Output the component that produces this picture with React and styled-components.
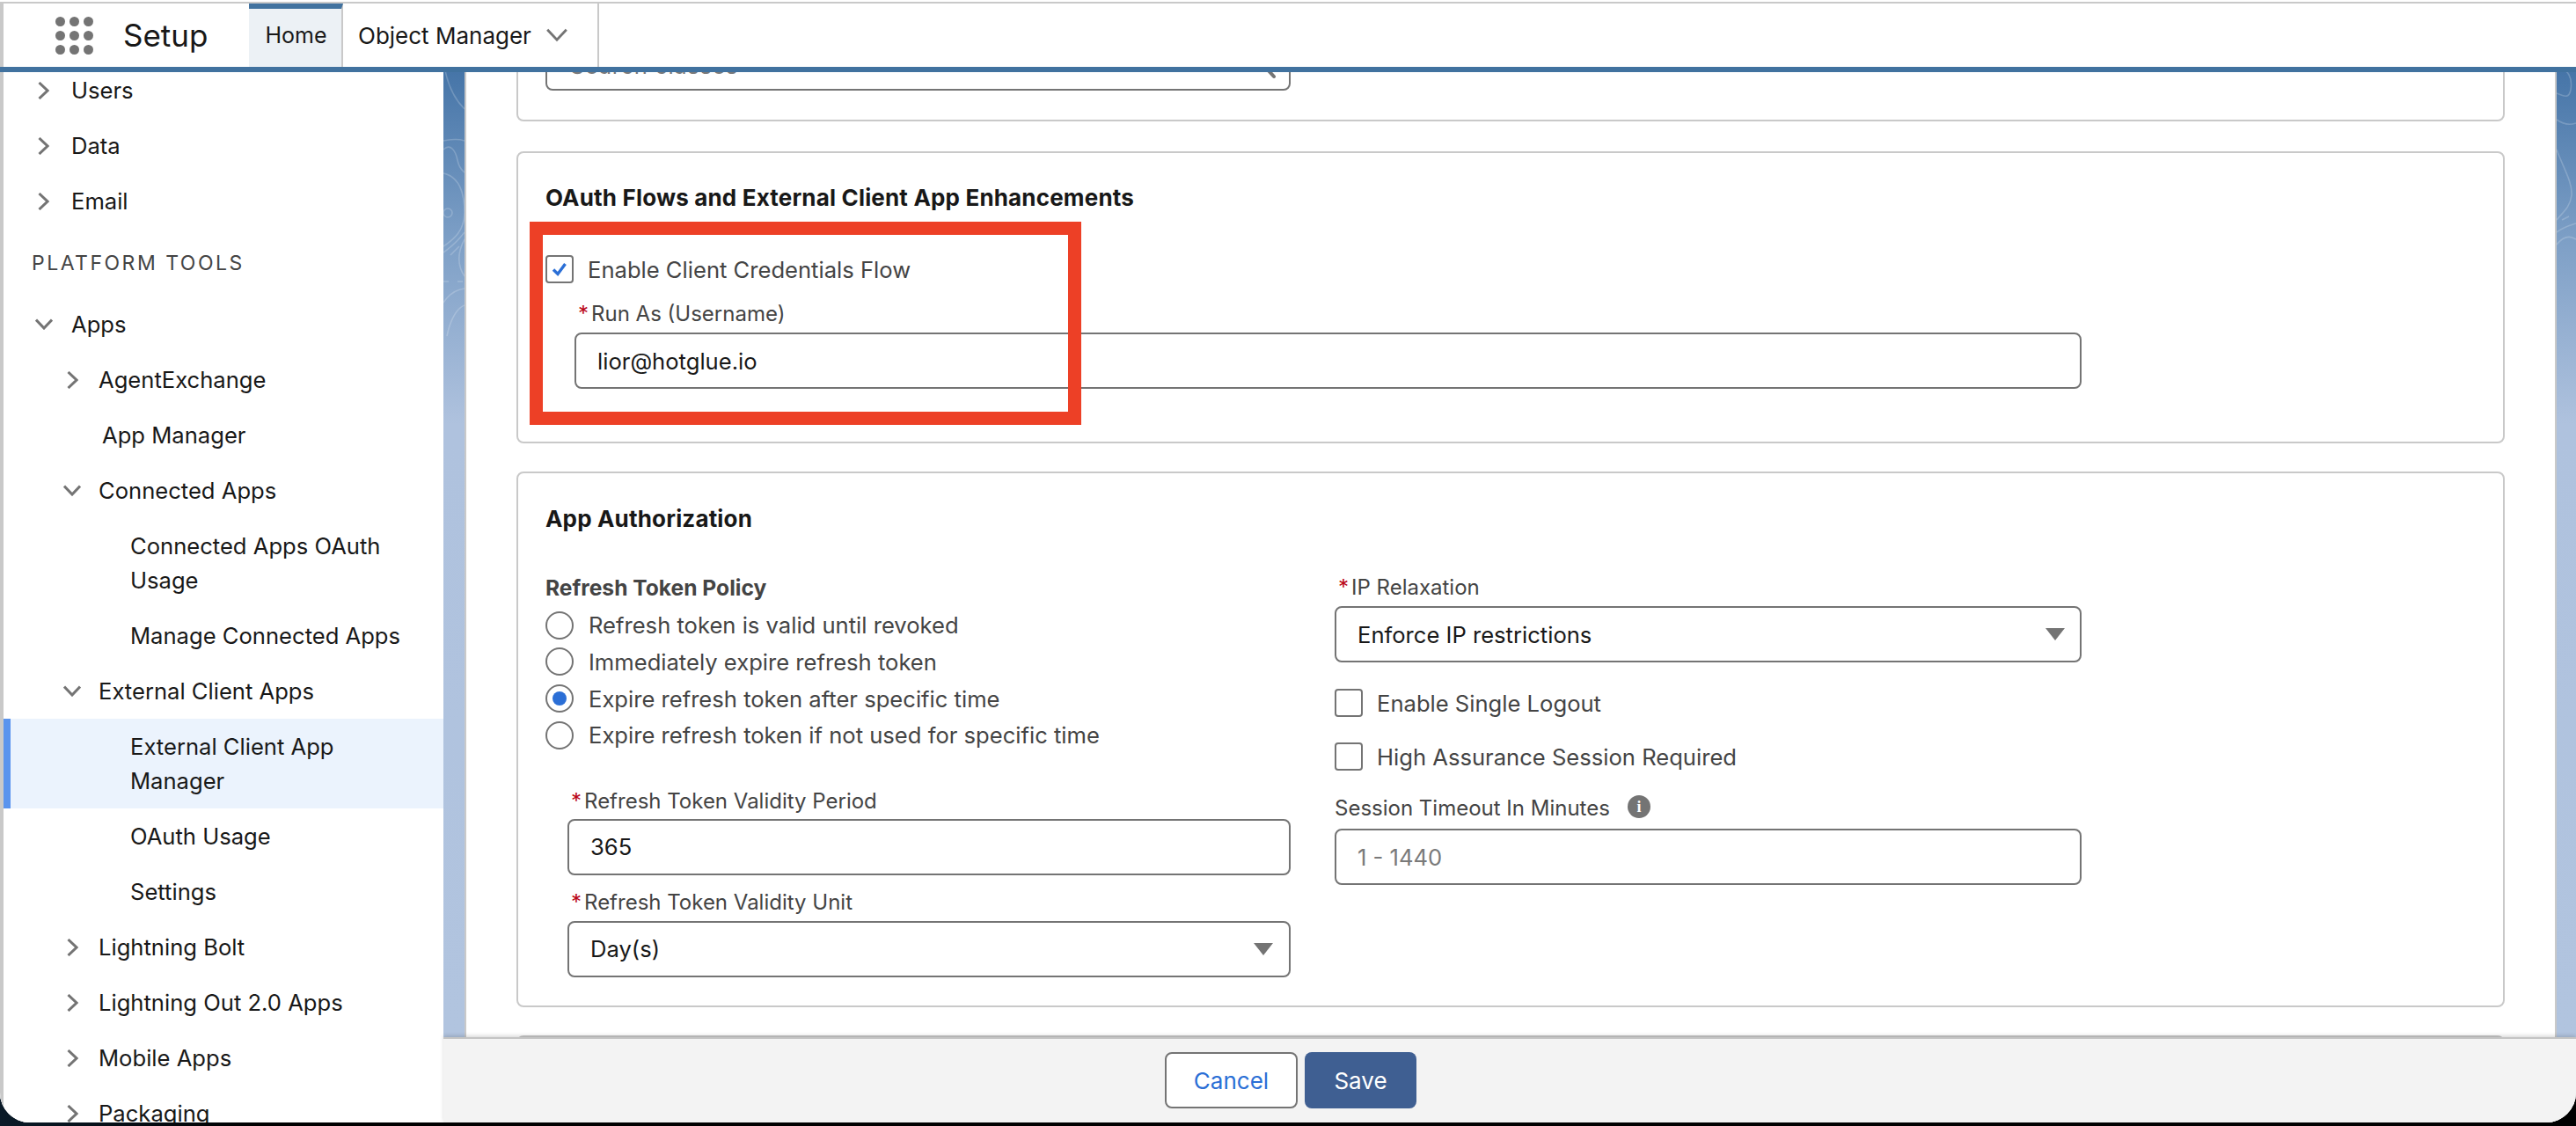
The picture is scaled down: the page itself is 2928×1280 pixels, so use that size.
import React from "react";
import styled, { createGlobalStyle } from "styled-components";

const Global = createGlobalStyle`
  html, body { margin: 0; padding: 0; background: #0a1420; }
  * { box-sizing: border-box; }
  body { font-family: Inter, Roboto, "Liberation Sans", sans-serif; color: #181818; }
`;

const Page = styled.div`
  width: 2928px; height: 1280px; overflow: hidden; background: linear-gradient(90deg, #0a1a28 0, #000 10%, #000 100%);
`;
const Win = styled.div`
  width: 2928px; height: 1276px; background: #fff; padding-top: 2px; overflow: hidden;
  border-radius: 0 0 34px 34px; display: flex; flex-direction: column;
`;
const TopBar = styled.header`
  height: 80px; flex: none; display: flex; border-top: 2px solid #c9c9c9; border-bottom: 6px solid #41729f; background: #fff;
`;
const Brand = styled.div`
  width: 283px; display: flex; align-items: center; gap: 34px; border-left: 4px solid #c9c9c9; padding-left: 59px;
`;
const Waffle = styled.div`
  display: grid; grid-template-columns: repeat(3, 11px); grid-auto-rows: 11px; gap: 5px; width: 43px;
  span { background: #747474; border-radius: 50%; }
`;
const AppName = styled.div`
  font-size: 35px; line-height: 44px; color: #181818;
`;
const HomeTab = styled.div`
  width: 107px; display: flex; align-items: center; justify-content: center; font-size: 25px; background: #ecf1f5;
  border-top: 6px solid #41729f; border-right: 2px solid #c9c9c9; padding: 0 0 6px 2px;
`;
const ObjTab = styled.div`
  width: 291px; display: flex; align-items: center; padding-left: 17px; gap: 17px; font-size: 26px; border-right: 2px solid #c9c9c9;
`;
const Body = styled.div`
  flex: 1; min-height: 0; display: flex; background: #fff;
`;
const Side = styled.nav`
  width: 504px; flex: none; overflow: hidden; border-left: 4px solid #c9c9c9; background: #fff;
`;
const SideInner = styled.div`
  margin-top: -11px;
`;
const Row = styled.div`
  display: flex; align-items: flex-start; padding: 12px 0 12px ${p => p.$pad}px; font-size: 25.6px; line-height: 39px; color: #181818;
  background: ${p => (p.$active ? "#ebf3fd" : "transparent")};
  border-left: ${p => (p.$active ? "8px solid #5a94ee" : "none")};
  ${p => p.$active && `padding-left: ${p.$pad - 8}px;`}
`;
const Twist = styled.span`
  width: ${p => p.$w}px; flex: none; height: 39px; display: flex; align-items: center;
`;
const NavText = styled.span`
  width: ${p => (p.$wrap ? "320px" : "auto")};
`;
const Section = styled.div`
  height: 77px; display: flex; align-items: center; padding-left: 32px; font-size: 23px; letter-spacing: 2.5px; color: #444;
`;
const Right = styled.div`
  flex: 1; min-width: 0; display: flex; flex-direction: column;
`;
const Stage = styled.div`
  flex: 1; min-height: 0; display: flex;
`;
const Strip = styled.div`
  width: ${p => p.$w}px; flex: none; overflow: hidden;
  background: linear-gradient(180deg, #4675a8 0, #7d9fc6 190px, #afc2de 400px, #b1c4df 100%);
  svg { display: block; }
`;
const Panel = styled.main`
  flex: 1; min-width: 0; overflow: hidden; background: #fff; border-left: 2px solid #c9c9c9; border-right: 2px solid #c9c9c9;
  padding: 0 57px; display: flex; flex-direction: column;
`;
const Card = styled.section`
  flex: none; position: relative; border: 2px solid #c9c9c9; border-radius: 8px; margin-top: ${p => p.$mt}px;
  padding: ${p => p.$pt}px 31px 0; height: ${p => p.$h}px;
`;
const CardTitle = styled.h2`
  margin: 0; font-size: 26px; letter-spacing: .17px; font-weight: 700; line-height: 36px; color: #181818;
`;
const Field = styled.div`
  height: 64px; border: 2px solid #747474; border-radius: 8px; background: #fff; display: flex; align-items: center; justify-content: space-between;
  padding: 0 ${p => p.$pr || 18}px 0 ${p => p.$pl || 24}px; font-size: 25.6px; color: ${p => p.$ph ? "#7a7a7a" : "#181818"};
  width: ${p => p.$w ? p.$w + "px" : "auto"}; margin-left: ${p => p.$ml || 0}px; margin-top: ${p => p.$mt || 0}px; position: relative;
`;
const SearchField = styled(Field)`
  padding-top: 7px;
  letter-spacing: .6px;
`;
const Caret = styled.span`
  width: 0; height: 0; border-left: 11px solid transparent; border-right: 11px solid transparent; border-top: 14px solid #747474;
`;
const SearchSlot = styled.span`
  position: absolute; right: 10px; top: 14px; line-height: 0;
`;
const CheckRow = styled.div`
  display: flex; align-items: center; gap: 16px; height: 32px; font-size: 25.6px; color: #444; margin-top: ${p => p.$mt}px;
`;
const Box = styled.span`
  width: 32px; height: 32px; flex: none; border: 2px solid #747474; border-radius: 4px; background: #fff; display: flex; align-items: center; justify-content: center;
`;
const FieldLabel = styled.div`
  font-size: 24px; line-height: 32px; color: #444; margin-top: ${p => p.$mt}px; padding-left: ${p => p.$pl || 0}px; display: flex; align-items: center;
  b { color: #ba0517; font-weight: 400; margin-right: 3px; }
`;
const Highlight = styled.div`
  position: absolute; left: 13px; top: 78px; width: 627px; height: 231px; border: 15px solid #ed4026;
`;
const Columns = styled.div`
  display: grid; grid-template-columns: 847px 849px; column-gap: 50px; margin-top: 44px;
`;
const Col = styled.div`
  display: flex; flex-direction: column;
`;
const PolicyLabel = styled.div`
  font-size: 24.6px; font-weight: 700; line-height: 32px; color: #444; margin-bottom: 6px;
`;
const RadioRow = styled.div`
  display: flex; align-items: center; gap: 17px; height: 41.67px; font-size: 25.6px; color: #444;
`;
const Radio = styled.span`
  width: 32px; height: 32px; border: 2px solid #747474; border-radius: 50%; display: flex; align-items: center; justify-content: center;
  &::after { content: ""; width: 16px; height: 16px; border-radius: 50%; background: ${p => (p.$on ? "#2b6fd6" : "transparent")}; }
`;
const InfoDot = styled.span`
  width: 26px; height: 26px; border-radius: 50%; background: #747474; color: #fff; font-size: 18px; font-weight: 700; display: flex;
  align-items: center; justify-content: center; margin-left: 20px; margin-top: -4px; font-family: "Liberation Serif", serif;
`;
const Footer = styled.footer`
  height: 97px; flex: none; background: #f3f3f3; border-top: 2px solid #c4c4c4; box-shadow: 0 -2px 4px rgba(0,0,0,.14); position: relative;
  display: flex; gap: 8px; padding: 15px 0 0 820px;
`;
const Cancel = styled.div`
  width: 151px; height: 64px; border: 2px solid #747474; border-radius: 8px; background: #fff; color: #2b6fd6; font-size: 26px;
  display: flex; align-items: center; justify-content: center;
`;
const Save = styled.div`
  width: 127px; height: 64px; border-radius: 8px; background: #3f5f92; color: #fff; font-size: 26px;
  display: flex; align-items: center; justify-content: center;
`;

const Chevron = ({ dir = "right", size = 20, stroke = 3 }) => (
  <svg width={dir === "right" ? size * 0.65 : size} height={dir === "right" ? size : size * 0.65}
    viewBox={dir === "right" ? "0 0 13 20" : "0 0 20 13"} fill="none" stroke="#747474" strokeWidth={stroke}>
    <path d={dir === "right" ? "M1.5 1 L11 10 L1.5 19" : "M1 1.5 L10 11 L19 1.5"} />
  </svg>
);

const Tick = () => (
  <svg width="18" height="18" viewBox="0 0 18 18" fill="none" stroke="#2b6fd6" strokeWidth="3.4">
    <path d="M2 9.5 L7 14.5 L15.5 3" />
  </svg>
);

const Magnifier = () => (
  <svg width="38" height="38" viewBox="0 0 38 38" fill="none" stroke="#747474" strokeWidth="4">
    <circle cx="13" cy="13" r="11" />
    <path d="M21 21 L31 32" strokeLinecap="round" />
  </svg>
);

const Wall = ({ w, h, paths, circle }) => (
  <svg width={w} height={h} viewBox={`0 0 ${w} ${h}`} fill="none" stroke="#fff" strokeOpacity=".2" strokeWidth="1.6">
    {paths.map((d, i) => <path key={i} d={d} />)}
    {circle && <circle cx={circle[0]} cy={circle[1]} r={circle[2]} />}
  </svg>
);

const leftCurves = [
  "M2 -2 C6 18 14 32 24 42", "M0 78 C10 76 18 76 24 78", "M0 88 C8 80 14 90 16 100 C18 110 22 112 24 114",
  "M0 115 C14 118 24 130 24 160 C24 180 12 190 0 198", "M0 205 C10 198 18 190 24 182", "M8 208 L18 198",
  "M24 190 C16 205 16 220 24 232", "M0 238 L6 238 M16 238 L22 238", "M0 262 C8 250 16 247 24 246", "M4 300 C8 280 16 268 24 265",
];
const rightCurves = [
  "M0 -2 C14 -6 18 8 16 20 C14 32 6 26 0 24", "M0 54 C8 60 16 60 22 58", "M0 88 C8 110 18 125 17 140 C15 155 6 160 0 168",
  "M6 168 L14 164 M0 182 C8 176 16 174 22 172", "M0 196 C8 186 16 186 22 190",
];

const sideTop = [
  { t: "Users", tw: "right", pad: 39, w: 38 },
  { t: "Data", tw: "right", pad: 39, w: 38 },
  { t: "Email", tw: "right", pad: 39, w: 38 },
];
const sideBottom = [
  { t: "Apps", tw: "down", pad: 36, w: 41 },
  { t: "AgentExchange", tw: "right", pad: 72, w: 36 },
  { t: "App Manager", pad: 112, w: 0 },
  { t: "Connected Apps", tw: "down", pad: 68, w: 40 },
  { t: "Connected Apps OAuth Usage", pad: 144, w: 0, wrap: true },
  { t: "Manage Connected Apps", pad: 144, w: 0 },
  { t: "External Client Apps", tw: "down", pad: 68, w: 40 },
  { t: "External Client App Manager", pad: 144, w: 0, active: true, wrap: true },
  { t: "OAuth Usage", pad: 144, w: 0 },
  { t: "Settings", pad: 144, w: 0 },
  { t: "Lightning Bolt", tw: "right", pad: 72, w: 36 },
  { t: "Lightning Out 2.0 Apps", tw: "right", pad: 72, w: 36 },
  { t: "Mobile Apps", tw: "right", pad: 72, w: 36 },
  { t: "Packaging", tw: "right", pad: 72, w: 36 },
];

const NavRow = ({ t, tw, pad, w, active, wrap }) => (
  <Row $pad={pad} $active={active}>
    {tw && <Twist $w={w}><Chevron dir={tw} /></Twist>}
    <NavText $wrap={wrap}>{t}</NavText>
  </Row>
);

const radios = [
  ["Refresh token is valid until revoked", false],
  ["Immediately expire refresh token", false],
  ["Expire refresh token after specific time", true],
  ["Expire refresh token if not used for specific time", false],
];

export default function App() {
  return (
    <Page>
      <Global />
      <Win>
        <TopBar>
          <Brand>
            <Waffle>{Array.from({ length: 9 }, (_, i) => <span key={i} />)}</Waffle>
            <AppName>Setup</AppName>
          </Brand>
          <HomeTab>Home</HomeTab>
          <ObjTab>Object Manager <Chevron dir="down" size={24} stroke={2.4} /></ObjTab>
        </TopBar>
        <Body>
          <Side>
            <SideInner>
              {sideTop.map(r => <NavRow key={r.t} {...r} />)}
              <Section>PLATFORM TOOLS</Section>
              {sideBottom.map(r => <NavRow key={r.t} {...r} />)}
            </SideInner>
          </Side>
          <Right>
            <Stage>
              <Strip $w={24}><Wall w={24} h={340} paths={leftCurves} circle={[5, 160, 5]} /></Strip>
              <Panel>
                <Card $mt={-60} $pt={15} $h={116}>
                  <SearchField $w={847} $ph $pl={26}>Search classes<SearchSlot><Magnifier /></SearchSlot></SearchField>
                </Card>
                <Card $mt={34} $pt={33} $h={332}>
                  <CardTitle>OAuth Flows and External Client App Enhancements</CardTitle>
                  <CheckRow $mt={47}><Box><Tick /></Box>Enable Client Credentials Flow</CheckRow>
                  <FieldLabel $mt={19} $pl={37}><b>*</b>Run As (Username)</FieldLabel>
                  <Field $ml={33} $w={1713} $mt={5}>lior@hotglue.io</Field>
                  <Highlight />
                </Card>
                <Card $mt={32} $pt={34} $h={609}>
                  <CardTitle>App Authorization</CardTitle>
                  <Columns>
                    <Col>
                      <PolicyLabel>Refresh Token Policy</PolicyLabel>
                      {radios.map(([t, on]) => <RadioRow key={t}><Radio $on={on} />{t}</RadioRow>)}
                      <FieldLabel $mt={38} $pl={29}><b>*</b>Refresh Token Validity Period</FieldLabel>
                      <Field $ml={25} $mt={4}>365</Field>
                      <FieldLabel $mt={15} $pl={29}><b>*</b>Refresh Token Validity Unit</FieldLabel>
                      <Field $ml={25} $mt={5}>Day(s)<Caret /></Field>
                    </Col>
                    <Col>
                      <FieldLabel $mt={0} $pl={4}><b>*</b>IP Relaxation</FieldLabel>
                      <Field $mt={5} $pr={17}>Enforce IP restrictions<Caret /></Field>
                      <CheckRow $mt={30}><Box />Enable Single Logout</CheckRow>
                      <CheckRow $mt={29}><Box />High Assurance Session Required</CheckRow>
                      <FieldLabel $mt={27}>Session Timeout In Minutes<InfoDot>i</InfoDot></FieldLabel>
                      <Field $mt={7} $ph>1 - 1440</Field>
                    </Col>
                  </Columns>
                </Card>
                <Card $mt={32} $pt={0} $h={200} />
              </Panel>
              <Strip $w={22}><Wall w={22} h={340} paths={rightCurves} /></Strip>
            </Stage>
            <Footer>
              <Cancel>Cancel</Cancel>
              <Save>Save</Save>
            </Footer>
          </Right>
        </Body>
      </Win>
    </Page>
  );
}
